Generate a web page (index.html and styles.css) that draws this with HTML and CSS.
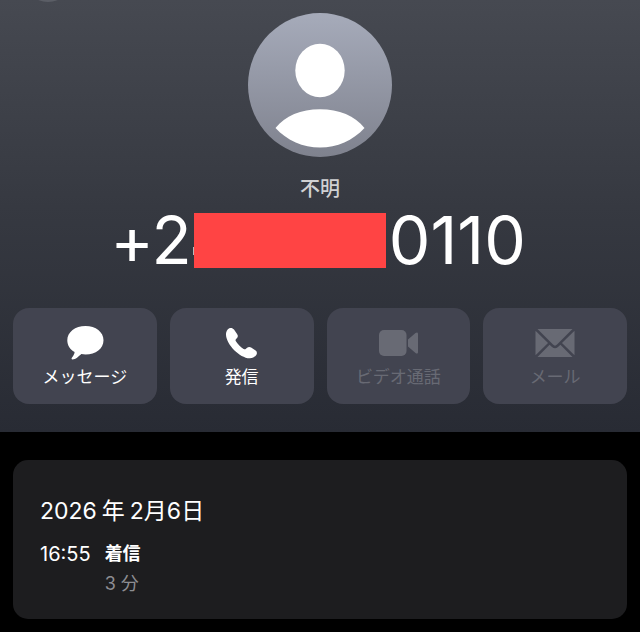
FILE: index.html
```html
<!DOCTYPE html>
<html lang="ja">
<head>
    <meta charset="UTF-8">
    <meta name="viewport" content="width=device-width, initial-scale=1.0">
    <title>不明</title>
    <link rel="stylesheet" href="styles.css">
</head>
<body>
    <header class="contact">
        <span class="back"></span>
        <svg class="avatar" viewBox="0 0 144 144" aria-hidden="true">
            <defs>
                <linearGradient id="avatarFill" x1="0" y1="0" x2="0" y2="1">
                    <stop offset="0" stop-color="#a6abba"/>
                    <stop offset="1" stop-color="#7f828e"/>
                </linearGradient>
            </defs>
            <circle cx="72" cy="72" r="72" fill="url(#avatarFill)"/>
            <ellipse cx="72" cy="57.500" rx="24.700" ry="26.700" fill="#fff"/>
            <path d="M27.500 115C37 103 53 96.300 72 96.300S107 103 116.500 115C105 127.500 89 134.500 72 134.500S39 127.500 27.500 115Z" fill="#fff"/>
        </svg>
        <p class="label">不明</p>
        <h1 class="number">+2<span class="redacted"></span>0110</h1>

        <div class="actions">
            <button class="action" type="button">
                <svg class="icon" viewBox="0 0 40 36" aria-hidden="true">
                    <path d="M20.500 1C30.800 1 38.500 7 38.500 15.300S30.800 29.500 20.500 29.500C19 29.500 17.600 29.400 16.300 29.100C13.700 31.500 10.500 34.600 7.600 34.600C6.300 34.600 6.300 33.500 7 32.600C8.400 30.800 9.500 28.900 9.600 27C4.800 24.500 2.300 20.300 2.300 15.300C2.300 7 10.200 1 20.500 1Z"/>
                </svg>
                <span>メッセージ</span>
            </button>
            <button class="action" type="button">
                <svg class="icon" viewBox="0 0 40 36" aria-hidden="true">
                    <path d="M7.300 3.200C8.900 2.500 10.900 3 12 4.500L15.200 9.200C16.200 10.700 16 12 14.800 13.300L13.900 14.300C13.400 14.900 13.400 15.400 13.900 16.200C15.400 18.700 18.900 22.200 21.600 23.900C22.400 24.400 23.100 24.400 23.700 23.900L24.800 23C26.100 21.900 27.600 21.500 29.100 22.500L33.600 25.600C35.100 26.700 35.300 28.400 34.300 29.900C32.600 32.300 30.200 33.400 27.600 33.300C17.500 32.700 4.700 19.800 4 9.900C3.800 7.200 5 4.500 7.300 3.200Z"/>
                </svg>
                <span>発信</span>
            </button>
            <button class="action" type="button" disabled>
                <svg class="icon" viewBox="0 0 40 36" aria-hidden="true">
                    <rect x="1" y="5" width="27.500" height="26" rx="5"/>
                    <path d="M30 14.500L37.500 8C39 6.800 40 7.500 40 9V27C40 28.500 39 29.200 37.500 28L30 21.500Z"/>
                </svg>
                <span>ビデオ通話</span>
            </button>
            <button class="action" type="button" disabled>
                <svg class="icon" viewBox="0 0 40 36" aria-hidden="true">
                    <path d="M2.500 4H37.500L22 19.500C20.500 21 19.500 21 18 19.500Z"/>
                    <path d="M.500 5.800L13 18L.500 30.200Z"/>
                    <path d="M39.500 5.800L27 18L39.500 30.200Z"/>
                    <path d="M2.500 32L14.600 19.700L17 22C19 23.800 21 23.800 23 22L25.400 19.700L37.500 32Z"/>
                </svg>
                <span>メール</span>
            </button>
        </div>
    </header>

    <main class="history">
        <section class="card">
            <h2 class="date">2026<span class="unit">年</span>2<span>月</span>6<span>日</span></h2>
            <dl class="call">
                <dt class="time">16:55</dt>
                <dd class="type">着信</dd>
                <dd class="duration">3<span class="unit">分</span></dd>
            </dl>
        </section>
    </main>
</body>
</html>
```
FILE: styles.css
```css
* {
    box-sizing: border-box;
}
body {
    margin: 0;
    background: #000;
    color: #fff;
    font-family: Inter, "Noto Sans CJK JP", sans-serif;
}
h1, h2, p, dl, dd {
    margin: 0;
    font-weight: 400;
}

/* contact header */
.contact {
    position: relative;
    display: flex;
    flex-direction: column;
    align-items: center;
    padding: 13px 13px 28px;
    background: linear-gradient(#464951, #363941 48%, #282b34);
    overflow: hidden;
}
.back {
    position: absolute;
    top: -46px;
    left: 24px;
    width: 48px;
    height: 48px;
    border-radius: 50%;
    background: #5b5e66;
}
.avatar {
    display: block;
    width: 144px;
    height: 144px;
}
.label {
    margin-top: 17px;
    font-size: 20px;
    font-weight: 500;
    line-height: 30px;
    color: #d0d1d3;
}
.number {
    display: flex;
    align-items: center;
    justify-content: center;
    padding-right: 4px;
    font-size: 66px;
    line-height: 72px;
    font-feature-settings: "calt" 0;
}
.redacted {
    position: relative;
    width: 192px;
    height: 55px;
    margin: 0 3px 0 2px;
    background: #ff4444;
}
/* edge of the digit left uncovered by the bar */
.redacted::before {
    content: "";
    position: absolute;
    left: -1px;
    top: 34px;
    width: 1px;
    height: 8px;
    background: #b9babd;
}

/* action buttons */
.actions {
    display: grid;
    grid-template-columns: repeat(4, 1fr);
    gap: 13px;
    width: 100%;
    margin-top: 32px;
}
.action {
    display: flex;
    flex-direction: column;
    align-items: center;
    height: 96px;
    padding: 17px 0 0;
    border: 0;
    border-radius: 16px;
    background: #424450;
    color: #fff;
    font-family: inherit;
    font-size: 17px;
    line-height: 24px;
    cursor: pointer;
}
.action:disabled {
    color: #686a74;
    cursor: default;
}
.icon {
    width: 40px;
    height: 36px;
    margin-bottom: 4px;
    fill: currentColor;
}

/* call history */
.history {
    padding: 28px 13px 13px;
}
.card {
    padding: 34px 27px 20px;
    border-radius: 15px;
    background: #1d1d1f;
}
.date {
    display: flex;
    font-size: 23px;
    line-height: 34px;
}
.unit {
    margin: 0 5px;
}
.call {
    display: grid;
    grid-template-columns: max-content 1fr;
    column-gap: 14px;
    margin-top: 11px;
    font-size: 20px;
    line-height: 30px;
}
.type {
    font-size: 18px;
    font-weight: 700;
}
.duration {
    grid-column: 2;
    font-size: 18px;
    color: #8d8d92;
}
```
